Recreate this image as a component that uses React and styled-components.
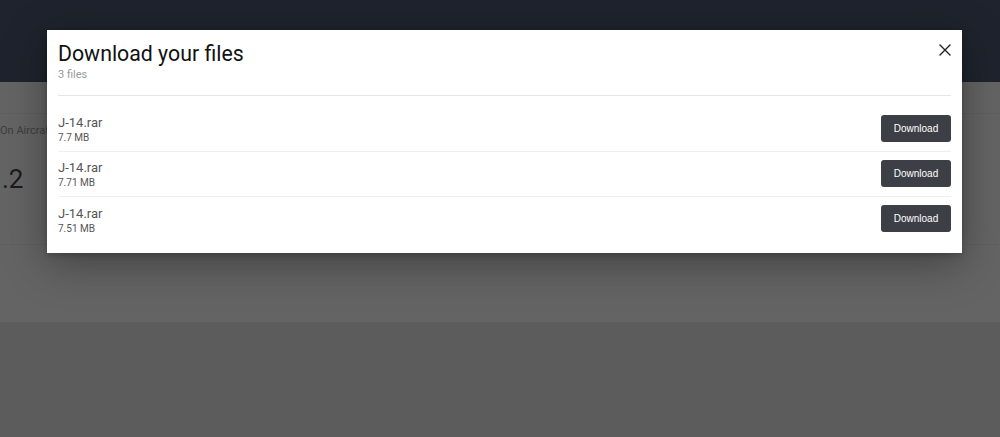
import React from "react";
import styled, { createGlobalStyle } from "styled-components";

const GlobalStyle = createGlobalStyle`
  html, body { margin: 0; padding: 0; }
  body {
    width: 1000px;
    height: 437px;
    overflow: hidden;
    font-family: Roboto, "Liberation Sans", Arial, sans-serif;
    background: #e5e5e9;
  }
`;

const files = [
  { name: "J-14.rar", size: "7.7 MB" },
  { name: "J-14.rar", size: "7.71 MB" },
  { name: "J-14.rar", size: "7.51 MB" },
];

const App = () => {
  return (
    <Page>
      <GlobalStyle />
      <Header />
      <Main>
        <SubBar />
        <Crumb>-On Aircraft</Crumb>
        <Version>.2</Version>
      </Main>
      <Strip />
      <Backdrop>
        <Modal>
          <ModalHead>
            <div>
              <Title>Download your files</Title>
              <Count>3 files</Count>
            </div>
            <CloseButton aria-label="close">
              <svg width="12" height="12" viewBox="0 0 12 12">
                <path d="M1 1 L11 11 M11 1 L1 11" stroke="#222" strokeWidth="1.4" strokeLinecap="round" />
              </svg>
            </CloseButton>
          </ModalHead>
          <FileList>
            {files.map((f, i) => (
              <FileRow key={i} last={i === files.length - 1}>
                <FileInfo>
                  <FileName>{f.name}</FileName>
                  <FileSize>{f.size}</FileSize>
                </FileInfo>
                <DownloadButton>Download</DownloadButton>
              </FileRow>
            ))}
          </FileList>
        </Modal>
      </Backdrop>
    </Page>
  );
};

const Page = styled.div`
  position: relative;
  width: 1000px;
  height: 437px;
  background: #e5e5e9;
`;

const Header = styled.div`
  height: 82px;
  background: #4d5770;
`;

const Main = styled.div`
  height: 163px;
  background: #fbfbfb;
  border-bottom: 1px solid #f0f0f0;
  box-sizing: border-box;
`;

const SubBar = styled.div`
  height: 31px;
  border-bottom: 1px solid #ededed;
`;

const Crumb = styled.div`
  margin: 10px 0 0 -3px;
  font-size: 11px;
  color: #999;
`;

const Version = styled.div`
  margin: 27px 0 0 2px;
  font-size: 26px;
  line-height: 30px;
  color: #444;
`;

const Strip = styled.div`
  height: 77px;
  background: #fbfbfb;
`;

const Backdrop = styled.div`
  position: absolute;
  inset: 0;
  background: rgba(0, 0, 0, 0.6);
  display: flex;
  justify-content: center;
  align-items: flex-start;
  padding-top: 30px;
  box-sizing: border-box;
`;

const Modal = styled.div`
  width: 915px;
  margin-left: 9px;
  background: #fff;
  padding: 10px 11px 11px;
  box-sizing: border-box;
  box-shadow: 0 10px 40px rgba(0, 0, 0, 0.35), 0 2px 6px rgba(0, 0, 0, 0.2);
`;

const ModalHead = styled.div`
  display: flex;
  justify-content: space-between;
  align-items: flex-start;
  padding-bottom: 13px;
  border-bottom: 1px solid #e6e6e6;
`;

const Title = styled.h2`
  margin: 0;
  font-size: 21.3px;
  font-weight: 400;
  line-height: 27px;
  color: #111;
`;

const Count = styled.div`
  font-size: 11px;
  line-height: 14px;
  color: #9a9a9a;
  margin-top: 1px;
`;

const CloseButton = styled.button`
  background: none;
  border: none;
  padding: 0;
  margin: 4px 0 0 0;
  width: 12px;
  height: 12px;
  cursor: pointer;
  display: flex;
`;

const FileList = styled.div`
  margin-top: 11px;
`;

const FileRow = styled.div`
  height: 45px;
  box-sizing: border-box;
  display: flex;
  align-items: center;
  justify-content: space-between;
  border-bottom: ${({ last }) => (last ? "none" : "1px solid #eeeeee")};
`;

const FileInfo = styled.div`
  display: flex;
  flex-direction: column;
  margin-top: 1px;
`;

const FileName = styled.div`
  font-size: 13px;
  line-height: 16px;
  color: #555;
`;

const FileSize = styled.div`
  font-size: 10px;
  line-height: 13px;
  color: #555;
`;

const DownloadButton = styled.button`
  width: 70px;
  height: 27px;
  border: none;
  border-radius: 3px;
  background: #3d3f47;
  color: #fff;
  font-family: "Liberation Sans", Arial, sans-serif;
  font-size: 10px;
  font-weight: 400;
  cursor: pointer;
  padding: 0;
  margin-top: -2px;
`;

export default App;
